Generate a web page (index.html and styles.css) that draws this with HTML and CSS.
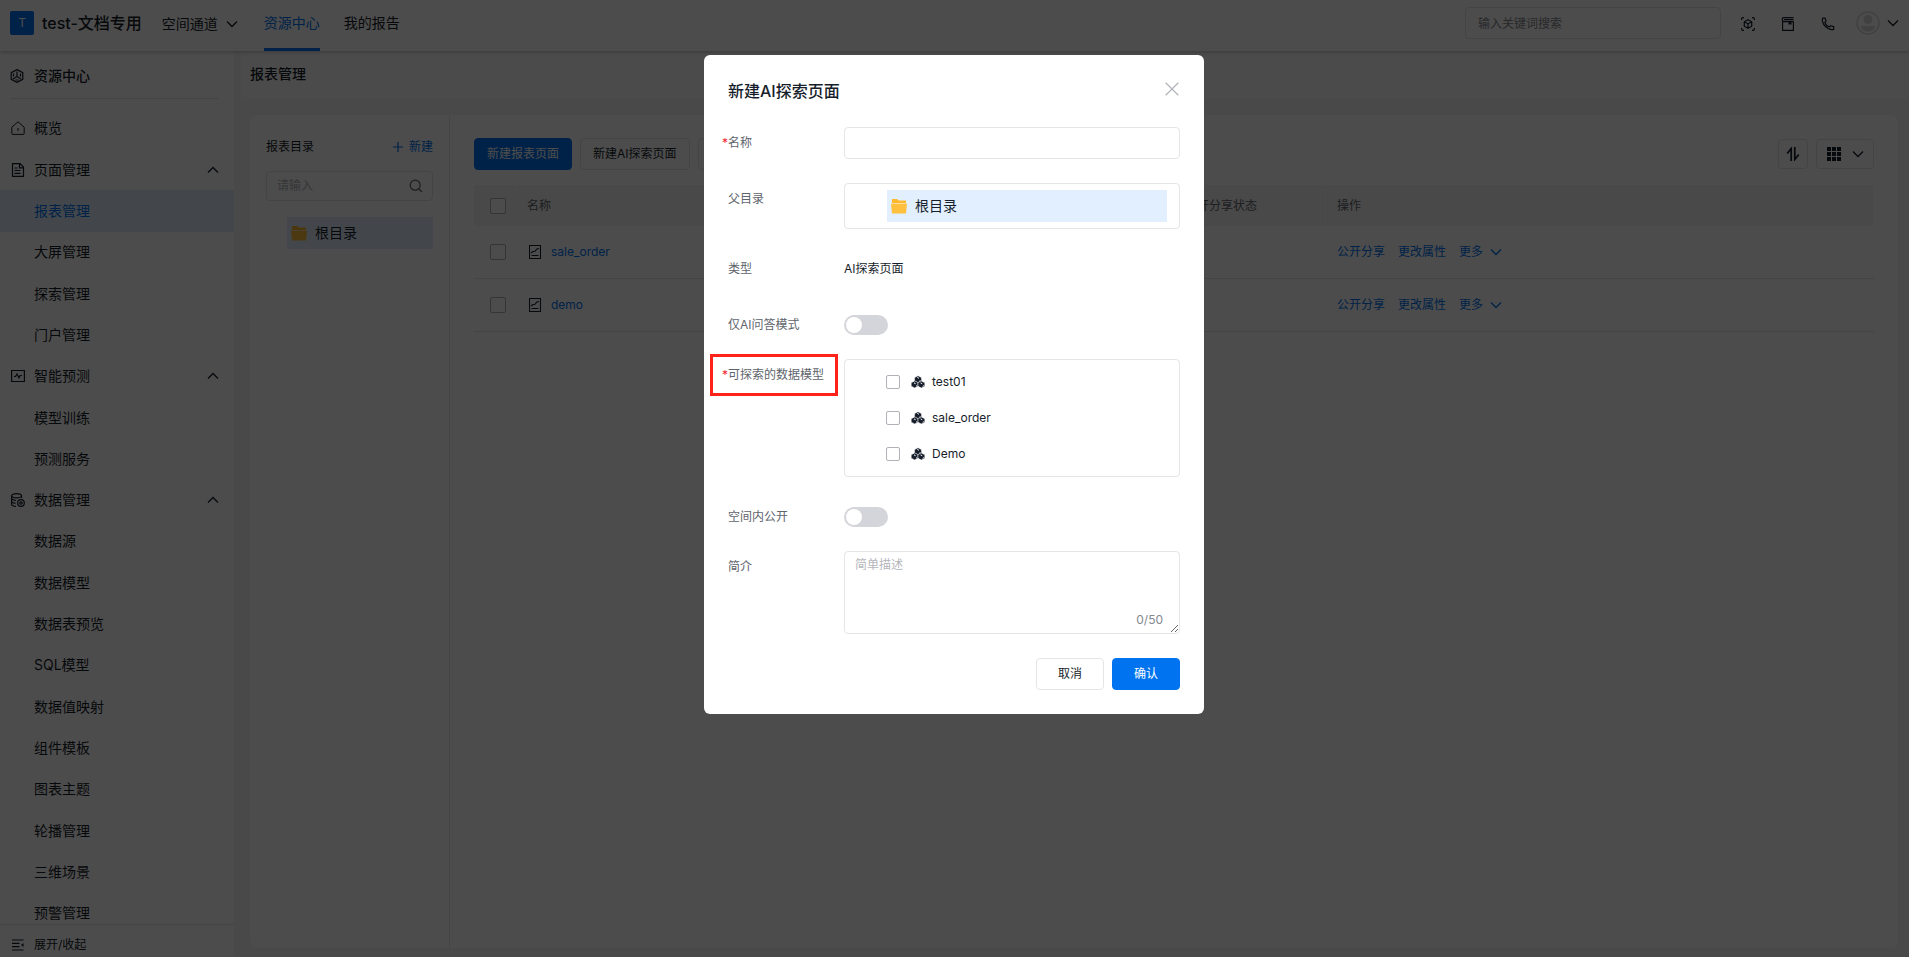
FILE: index.html
```html
<!DOCTYPE html>
<html lang="zh-CN">
<head>
<meta charset="utf-8">
<title>报表管理</title>
<link rel="stylesheet" href="styles.css">
</head>
<body>
<svg class="sprite" aria-hidden="true">
  <symbol id="down" viewBox="0 0 12 12"><path d="M1 3.5 6 8.5 11 3.5" fill="none" stroke="currentColor" stroke-width="1.3"/></symbol>
  <symbol id="up" viewBox="0 0 12 12"><path d="M1 8.5 6 3.5 11 8.5" fill="none" stroke="currentColor" stroke-width="1.3"/></symbol>
  <symbol id="folder" viewBox="0 0 16 16"><path d="M1 1h5l1.5 1.5H15V5H1z" fill="#ffb72b"/><path d="M0 5.5h16l-1 10H1z" fill="#ffc03d"/><path d="M1 5h14v.8H1z" fill="#ffe2a3"/></symbol>
  <symbol id="report" viewBox="0 0 12 14"><path d="M.5.5h11v13H.5zM2.5 10.500h7M2 8l2-1.500 2-.3 2-2.200 2-.5" fill="none" stroke="currentColor" stroke-width="1.1"/></symbol>
  <symbol id="model" viewBox="0 0 14 14"><g fill="currentColor" stroke="#fff" stroke-width=".5" stroke-linejoin="round"><path d="M7 .8 10.300 2.400 10.800 6.200 7 7.900 3.300 6.200 3.700 2.400z"/><path d="M3.700 5.900 7 7.600v3.700l-3.300 1.600L.2 11.200V7.800z"/><path d="M10.300 5.900l3.500 1.900v3.400l-3.500 1.700L7 11.300V7.600z"/></g><path d="M6.300 2.400 7.900 3.200M3 7.900l1.600.8M9.600 7.900l1.600.8M8.400 6.200l1-.5M5.100 11.200l1-.6M11.700 11.200l1-.6" fill="none" stroke="#fff" stroke-width="1"/></symbol>
</svg>

<header class="topbar">
  <span class="logo">T</span>
  <strong class="space-name">test-文档专用</strong>
  <button class="space-switch" type="button">空间通道 <svg class="i12"><use href="#down"/></svg></button>
  <nav class="tabs">
    <a class="tab tab-on" href="#">资源中心</a>
    <a class="tab" href="#">我的报告</a>
  </nav>
  <input class="global-search" type="search" aria-label="搜索" placeholder="输入关键词搜索">
  <button class="icon-btn" type="button" aria-label="三维"><svg class="i14" viewBox="0 0 14 14" fill="none" stroke="currentColor" stroke-width="1.200"><path d="M.6 3V2A1.400 1.400 0 0 1 2 .6h1M11 .6h1A1.400 1.400 0 0 1 13.400 2v1M13.400 11v1a1.400 1.400 0 0 1-1.400 1.400h-1M3 13.400H2A1.400 1.400 0 0 1 .6 12v-1M7 2.800l3.700 2v4.400L7 11.200l-3.700-2V4.800zM3.300 4.800 7 6.900l3.700-2.100M7 6.900v4.300"/></svg></button>
  <button class="icon-btn" type="button" aria-label="手册"><svg class="i14" viewBox="0 0 14 14" fill="none" stroke="currentColor" stroke-width="1.200"><path d="M12.400 4.600H2.300a1 1 0 0 1-.9-1V1.600a1 1 0 0 1 1-1h10.200M12.600 2.600H3M1.600 3v10.400h10.800V4.600"/><path d="M7.500 5h3v3L9 7 7.500 8z" fill="currentColor" stroke="none"/></svg></button>
  <button class="icon-btn" type="button" aria-label="电话"><svg class="i14" viewBox="0 0 14 14" fill="none" stroke="currentColor" stroke-width="1.200" stroke-linejoin="round"><path d="M1.600 1.200h2.500l1 3-1.300 1.300c.8 1.900 2.200 3.500 4.400 4.500l1.500-1.300 3 .9v2.800c-1.500.6-3.500.2-5.500-.9C4.300 9.800 2.300 7.500 1.500 4.500c-.3-1.200-.3-2.300.1-3.300z"/></svg></button>
  <button class="account" type="button" aria-label="账户"><svg class="i24" viewBox="0 0 24 24"><circle cx="12" cy="12" r="11" fill="none" stroke="#d9d9de" stroke-width="1.500"/><circle cx="12" cy="8.500" r="4.500" fill="#d9d9de"/><path d="M4.500 15h15c-.5 3-3.500 5.500-7.500 5.500S5 18 4.500 15z" fill="#d9d9de"/></svg><svg class="i12"><use href="#down"/></svg></button>
</header>

<div class="body">
  <aside class="side">
    <h2 class="side-title"><svg class="i14" viewBox="0 0 14 14" fill="none" stroke="currentColor" stroke-width="1.200"><path d="M7 .6 12.800 3.700v6.600L7 13.400 1.200 10.300V3.700zM7 2.500v5L3 10M7 7.500l4 2.500M3.500 4.500v3M10.500 4.500v3M5.500 11h3"/></svg>资源中心</h2>
    <a class="side-row side-home" href="#"><svg class="i14" viewBox="0 0 14 14" fill="none" stroke="currentColor"><path d="M7 .8 13.200 6.200v6.200a1 1 0 0 1-1 1H1.800a1 1 0 0 1-1-1V6.200zM7 7v3"/></svg>概览</a>
    <nav class="side-nav">
      <button class="side-row" type="button"><svg class="i14" viewBox="0 0 14 14" fill="none" stroke="currentColor" stroke-width="1.200"><path d="M1.500.6h7.500l3.500 3.500v9.300h-11zM8.500.8v4h4M3.500 5h3M3.500 7.500h6M3.500 10.300h6"/></svg>页面管理<svg class="i12 fold"><use href="#up"/></svg></button>
      <a class="side-row side-on" href="#">报表管理</a>
      <a class="side-row" href="#">大屏管理</a>
      <a class="side-row" href="#">探索管理</a>
      <a class="side-row" href="#">门户管理</a>
      <button class="side-row" type="button"><svg class="i14" viewBox="0 0 14 14" fill="none" stroke="currentColor" stroke-width="1.200"><path d="M.6 1.500h12.800v11H.6zM3 7.500h1.500L6 5l2 4 1.200-2.500H11"/></svg>智能预测<svg class="i12 fold"><use href="#up"/></svg></button>
      <a class="side-row" href="#">模型训练</a>
      <a class="side-row" href="#">预测服务</a>
      <button class="side-row" type="button"><svg class="i14" viewBox="0 0 14 14" fill="none" stroke="currentColor" stroke-width="1.200"><ellipse cx="5.500" cy="2.700" rx="5" ry="2.100"/><path d="M.5 2.700v8.500c0 1.200 2 2 4.500 2.200M10.500 2.700V5M.5 5.500c.5 1.300 2 1.800 4.500 2M.5 8.500c.5 1.200 2 1.700 4 1.900"/><circle cx="10" cy="10" r="3.300"/><circle cx="10" cy="10" r="1.200"/></svg>数据管理<svg class="i12 fold"><use href="#up"/></svg></button>
      <a class="side-row" href="#">数据源</a>
      <a class="side-row" href="#">数据模型</a>
      <a class="side-row" href="#">数据表预览</a>
      <a class="side-row" href="#">SQL模型</a>
      <a class="side-row" href="#">数据值映射</a>
      <a class="side-row" href="#">组件模板</a>
      <a class="side-row" href="#">图表主题</a>
      <a class="side-row" href="#">轮播管理</a>
      <a class="side-row" href="#">三维场景</a>
      <a class="side-row" href="#">预警管理</a>
    </nav>
    <button class="side-foot" type="button"><svg class="i14" viewBox="0 0 14 14" fill="none" stroke="currentColor" stroke-width="1.200"><path d="M1 2h11.500M1 5.300h7.500M1 8.600h7.500M1 12h11.500"/><path d="M12.500 5v4L10 7z" fill="currentColor" stroke="none"/></svg>展开/收起</button>
  </aside>

  <main class="main">
    <h1 class="page-title">报表管理</h1>
    <div class="card">
      <section class="tree">
        <div class="tree-head"><span>报表目录</span><button class="link-btn" type="button"><svg class="i12" viewBox="0 0 12 12" stroke="currentColor" stroke-width="1.200"><path d="M6 1v10M1 6h10"/></svg>新建</button></div>
        <div class="tree-search"><input type="text" aria-label="搜索目录" placeholder="请输入"><svg class="i14" viewBox="0 0 14 14" fill="none" stroke="currentColor" stroke-width="1.200"><circle cx="6.200" cy="6.200" r="5"/><path d="m10 10 3 3"/></svg></div>
        <a class="tree-node tree-root" href="#"><svg class="i16"><use href="#folder"/></svg>根目录</a>
      </section>
      <section class="list">
        <div class="toolbar">
          <button class="btn btn-primary" type="button">新建报表页面</button>
          <button class="btn" type="button">新建AI探索页面</button>
          <button class="btn btn-wide" type="button" aria-label="批量操作"></button>
          <button class="btn btn-sm push" type="button" aria-label="排序"><svg class="i14" viewBox="0 0 14 14" fill="none" stroke="currentColor" stroke-width="1.700"><path d="M5.200 14V1.500L1.200 6.500M8.800 0v12.500L12.800 7.500"/></svg></button>
          <button class="btn btn-sm" type="button" aria-label="视图"><svg class="i14" viewBox="0 0 14 14" fill="currentColor"><path d="M0 0h4v4H0zM5 0h4v4H5zM10 0h4v4h-4zM0 5h4v4H0zM5 5h4v4H5zM10 5h4v4h-4zM0 10h4v4H0zM5 10h4v4H5zM10 10h4v4h-4z"/></svg><svg class="i12"><use href="#down"/></svg></button>
        </div>
        <table class="grid">
          <colgroup><col class="c-check"><col class="c-name"><col class="c-state"><col></colgroup>
          <thead><tr><th><input class="check" type="checkbox" aria-label="全选"></th><th>名称</th><th>公开分享状态</th><th>操作</th></tr></thead>
          <tbody>
            <tr><td><input class="check" type="checkbox" aria-label="sale_order"></td><td><a class="name" href="#"><svg class="report"><use href="#report"/></svg>sale_order</a></td><td></td><td><div class="acts"><a href="#">公开分享</a><a href="#">更改属性</a><a href="#">更多 <svg class="i12"><use href="#down"/></svg></a></div></td></tr>
            <tr><td><input class="check" type="checkbox" aria-label="demo"></td><td><a class="name" href="#"><svg class="report"><use href="#report"/></svg>demo</a></td><td></td><td><div class="acts"><a href="#">公开分享</a><a href="#">更改属性</a><a href="#">更多 <svg class="i12"><use href="#down"/></svg></a></div></td></tr>
          </tbody>
        </table>
      </section>
    </div>
  </main>
</div>

<div class="mask">
  <form class="dialog" role="dialog" aria-labelledby="dlg-title">
    <div class="dialog-head">
      <h2 id="dlg-title">新建AI探索页面</h2>
      <button class="close" type="button" aria-label="关闭"><svg class="i14" viewBox="0 0 14 14" stroke="currentColor" stroke-width="1.300"><path d="M.7.7l12.600 12.600M13.300.7.7 13.300"/></svg></button>
    </div>
    <div class="field"><label class="label required" for="f-name">名称</label><input class="box text" id="f-name" type="text"></div>
    <div class="field"><span class="label">父目录</span><div class="box parent"><a class="tree-node" href="#"><svg class="i16"><use href="#folder"/></svg>根目录</a></div></div>
    <div class="field"><span class="label">类型</span><span class="value">AI探索页面</span></div>
    <div class="field field-switch"><label class="label" for="f-ai">仅AI问答模式</label><input class="switch" id="f-ai" type="checkbox" role="switch"></div>
    <div class="field"><span class="label required marked">可探索的数据模型</span>
      <div class="box models">
        <label><input class="check" type="checkbox"><svg class="i14"><use href="#model"/></svg>test01</label>
        <label><input class="check" type="checkbox"><svg class="i14"><use href="#model"/></svg>sale_order</label>
        <label><input class="check" type="checkbox"><svg class="i14"><use href="#model"/></svg>Demo</label>
      </div></div>
    <div class="field field-switch"><label class="label" for="f-open">空间内公开</label><input class="switch" id="f-open" type="checkbox" role="switch"></div>
    <div class="field"><label class="label" for="f-desc">简介</label><div class="desc"><textarea class="box" id="f-desc" placeholder="简单描述"></textarea><span class="count">0/50</span></div></div>
    <div class="dialog-foot"><button class="btn btn-wide" type="button">取消</button><button class="btn btn-wide btn-primary" type="submit">确认</button></div>
  </form>
</div>
</body>
</html>
```

FILE: styles.css
```css
:root {
  --ink: #171e2b;
  --muted: #60646c;
  --hint: #b4b6bc;
  --line: #e4e5e8;
  --blue: #0073f0;
  --pick: #e1effe;
}
* { box-sizing: border-box; }
body {
  margin: 0;
  height: 100vh;
  display: flex;
  flex-direction: column;
  overflow: hidden;
  background: #f5f5f6;
  color: var(--ink);
  font: 12px/20px Inter, "Noto Sans CJK SC", sans-serif;
}
h1, h2 { margin: 0; font-weight: 500; }
a { color: inherit; text-decoration: none; }
button, input, textarea { font: inherit; color: inherit; }
button { padding: 0; border: 0; background: none; }
svg { flex: none; }
.sprite { display: none; }
.i12 { width: 12px; height: 12px; }
.i14 { width: 14px; height: 14px; }
.i16 { width: 16px; height: 16px; }
.i24 { width: 24px; height: 24px; }
::placeholder { color: var(--hint); opacity: 1; }

.topbar {
  position: relative;
  flex: none;
  height: 51px;
  padding: 0 10px;
  display: flex;
  align-items: center;
  background: #fff;
  box-shadow: 0 1px 4px rgba(0, 0, 0, .25);
  font-size: 14px;
}
.logo {
  width: 24px;
  height: 24px;
  margin: 0 8px 5px 0;
  border-radius: 2px;
  background: var(--blue);
  color: #fff;
  font-size: 12px;
  line-height: 24px;
  text-align: center;
}
.space-name { margin: 0 20px 5px 0; font-size: 16px; font-weight: 500; }
.space-switch { display: flex; align-items: center; gap: 8px; margin: 0 26px 3px 0; }
.tabs { align-self: stretch; display: flex; gap: 24px; }
.tab { border-bottom: 3px solid transparent; line-height: 46px; }
.tab-on { color: var(--blue); border-color: var(--blue); }
.global-search {
  width: 256px;
  height: 32px;
  margin: 0 20px 5px auto;
  padding: 0 12px;
  border: 1px solid var(--line);
  border-radius: 4px;
  background: none;
  font-size: 12px;
}
.global-search::placeholder { color: #85888f; }
.icon-btn { display: flex; margin: 0 26px 3px 0; }
.account { display: flex; align-items: center; gap: 7px; margin: 0 0 5px -5px; }

.body { flex: 1; min-height: 0; display: flex; }
.side {
  flex: none;
  width: 234px;
  display: flex;
  flex-direction: column;
  background: #fff;
  font-size: 14px;
}
.side-title {
  display: flex;
  align-items: center;
  gap: 10px;
  height: 48px;
  margin: 0 16px 8px 10px;
  padding-top: 2px;
  border-bottom: 1px solid var(--line);
  font-size: 14px;
}
.side-row {
  display: flex;
  align-items: center;
  width: 100%;
  padding: 0 10px 0 34px;
  text-align: left;
}
.side-row:has(.i14) { gap: 10px; padding: 0 15px 0 11px; }
.side-row:has(.i14) > .i14 { margin-right: -1px; }
.side-home { height: 42px; }
.side-nav {
  flex: 1;
  margin-bottom: -10px;
  display: grid;
  grid-auto-rows: 1fr;
}
.side-on { background: var(--pick); color: var(--blue); }
.fold { margin-left: auto; }
.side-foot {
  position: relative;
  display: flex;
  align-items: center;
  gap: 9px;
  height: 33px;
  padding: 8px 11px 0;
  border-top: 1px solid var(--line);
  background: #fff;
  font-size: 12px;
}

.main { flex: 1; min-width: 0; display: flex; flex-direction: column; }
.page-title {
  height: 48px;
  margin-left: 7px;
  padding-left: 9px;
  background: #fcfcfc;
  font-size: 14px;
  line-height: 46px;
}
.card {
  flex: 1;
  margin: 16px 11px 9px 16px;
  display: flex;
  border-radius: 8px;
  background: #fff;
}
.tree { width: 200px; padding: 22px 16px; border-right: 1px solid var(--line); }
.tree-head { display: flex; justify-content: space-between; }
.link-btn { display: flex; align-items: center; gap: 5px; color: var(--blue); }
.tree-search {
  display: flex;
  align-items: center;
  height: 30px;
  margin: 14px 0 16px;
  padding: 0 9px 0 10px;
  border: 1px solid var(--line);
  border-radius: 4px;
  color: var(--muted);
}
.tree-search input { flex: 1; min-width: 0; padding: 0; border: 0; background: none; }
.tree-node {
  display: flex;
  align-items: center;
  gap: 8px;
  height: 32px;
  padding: 0 4px;
  background: var(--pick);
  font-size: 14px;
}
.tree-root { margin-left: 21px; }
.list { flex: 1; min-width: 0; padding: 23px 24px; }
.toolbar { display: flex; align-items: center; gap: 8px; }
.btn {
  height: 32px;
  padding: 0 12px;
  border: 1px solid var(--line);
  border-radius: 4px;
  background: #fff;
}
.btn-primary { border-color: var(--blue); background: var(--blue); color: #fff; }
.btn-sm { display: flex; align-items: center; gap: 11px; height: 30px; padding: 0 7px; }
.btn-sm:last-child { padding: 0 9px 0 10px; }
.push { margin-left: auto; }
.btn-wide { width: 68px; }

.grid { width: 100%; margin-top: 15px; border-spacing: 0; table-layout: fixed; }
.c-check { width: 42px; }
.c-name { width: 47%; }
.c-state { width: 152px; }
.grid th, .grid td { padding: 0 11px; text-align: left; }
.grid th:first-child, .grid td:first-child { padding: 0 10px 0 16px; }
.grid th {
  height: 41px;
  border-right: 1px solid #fbfbfb;
  background: #f5f5f6;
  color: var(--muted);
  font-weight: 400;
}
.grid td { height: 53px; border-bottom: 1px solid var(--line); color: var(--blue); }
.name { display: flex; align-items: center; gap: 10px; padding-left: 2px; }
.report { width: 12px; height: 14px; color: var(--ink); }
.acts, .acts a { display: flex; align-items: center; }
.acts { gap: 13px; }
.acts a { gap: 7px; }
.check {
  appearance: none;
  display: block;
  flex: none;
  width: 16px;
  height: 16px;
  margin: 0;
  border: 1px solid #b0b2b8;
  border-radius: 2px;
  background: #fff;
}

.mask {
  position: fixed;
  inset: 0;
  display: flex;
  justify-content: center;
  align-items: flex-start;
  padding: 55px 1px 0 0;
  background: rgba(0, 0, 0, .7);
}
.dialog {
  width: 500px;
  padding: 24px;
  display: flex;
  flex-direction: column;
  gap: 24px;
  border-radius: 6px;
  background: #fff;
}
.dialog-head { display: flex; justify-content: space-between; }
.dialog-head h2 { font-size: 16px; line-height: 24px; }
.close { display: flex; align-items: center; height: 20px; padding-right: 1px; color: #b4b6bc; }
.field { display: flex; align-items: flex-start; }
.label { position: relative; flex: none; width: 116px; color: var(--muted); line-height: 32px; }
.required::before { content: "*"; position: absolute; left: -6px; color: #f5222d; }
.marked::after {
  content: "";
  position: absolute;
  inset: -5px 6px -5px -18px;
  border: 3px solid #ff2219;
}
.box { flex: 1; min-width: 0; border: 1px solid var(--line); border-radius: 4px; background: #fff; }
.text { height: 32px; padding: 0 10px; }
.parent { padding: 6px 12px 6px 42px; }
.value { line-height: 32px; }
.field-switch .label { margin-bottom: -6px; }
.switch {
  appearance: none;
  width: 44px;
  height: 20px;
  margin: 6px 0 0;
  padding: 2px;
  border-radius: 10px;
  background: #d4d5da;
}
.switch::before {
  content: "";
  display: block;
  width: 16px;
  height: 16px;
  border-radius: 50%;
  background: #fff;
}
.models { padding: 4px 41px; }
.models label { display: flex; align-items: center; height: 36px; }
.models .check { width: 14px; height: 14px; margin-right: 11px; }
.models svg { margin-right: 7px; }
.desc { position: relative; flex: 1; display: flex; }
.desc textarea { height: 83px; padding: 3px 10px; resize: vertical; }
.count { position: absolute; right: 17px; bottom: 4px; color: #85888f; }
.dialog-foot { display: flex; justify-content: flex-end; gap: 8px; }
```
